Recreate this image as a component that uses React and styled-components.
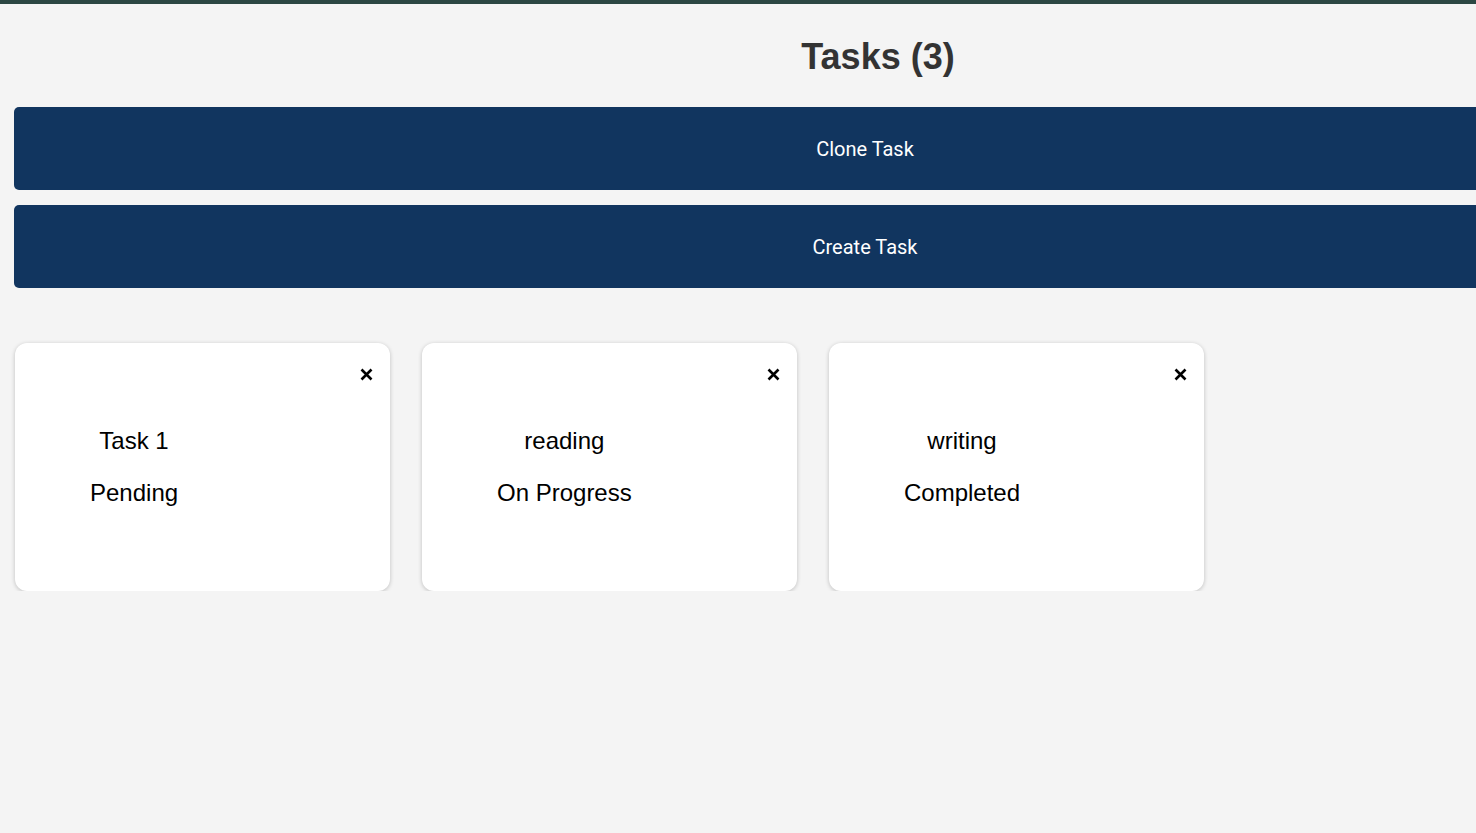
import React from "react";
import styled, { createGlobalStyle } from "styled-components";

const Global = createGlobalStyle`
  html, body { margin: 0; padding: 0; }
  body {
    background: #f4f4f4;
    font-family: "Liberation Sans", Arial, sans-serif;
    overflow-x: hidden;
  }
`;

const TopBar = styled.div`
  height: 4px;
  background: #2c4743;
`;

const Main = styled.main`
  width: 1756px;
`;

const Title = styled.h1`
  margin: 0;
  padding-top: 32px;
  height: 103px;
  box-sizing: border-box;
  text-align: center;
  font-size: 36px;
  line-height: 41px;
  font-weight: 700;
  color: #333;
`;

const ButtonStack = styled.div`
  display: flex;
  flex-direction: column;
  gap: 15px;
  margin-left: 14px;
  width: 1702px;
`;

const ActionButton = styled.button`
  height: 83px;
  border: none;
  border-radius: 5px;
  background: #11355f;
  color: #fff;
  font-family: "Roboto", "Liberation Sans", sans-serif;
  font-size: 20px;
  cursor: pointer;
`;

const CardRow = styled.div`
  display: flex;
  gap: 32px;
  margin: 55px 0 0 15px;
`;

const Card = styled.div`
  position: relative;
  width: 375px;
  height: 248px;
  box-sizing: border-box;
  background: #fff;
  border-radius: 12px;
  box-shadow: 0 1px 4px rgba(0, 0, 0, 0.22);
  padding: 84px 0 0 75px;
`;

const Close = styled.button`
  position: absolute;
  top: 23px;
  right: 16px;
  width: 16px;
  height: 16px;
  padding: 0;
  border: none;
  background: none;
  display: flex;
  align-items: center;
  justify-content: center;
  cursor: pointer;
`;

const Content = styled.div`
  display: inline-flex;
  flex-direction: column;
  align-items: center;
  gap: 24px;
  font-size: 24px;
  line-height: 28px;
  color: #000;
`;

const tasks = [
  { name: "Task 1", status: "Pending" },
  { name: "reading", status: "On Progress" },
  { name: "writing", status: "Completed" },
];

const XIcon = () => (
  <svg width="13" height="13" viewBox="0 0 13 13">
    <path d="M1.5 1.5 L11.5 11.5 M11.5 1.5 L1.5 11.5" stroke="#000" strokeWidth="2.6" strokeLinecap="butt" />
  </svg>
);

export default function App() {
  return (
    <>
      <Global />
      <TopBar />
      <Main>
        <Title>Tasks ({tasks.length})</Title>
        <ButtonStack>
          <ActionButton>Clone Task</ActionButton>
          <ActionButton>Create Task</ActionButton>
        </ButtonStack>
        <CardRow>
          {tasks.map((t) => (
            <Card key={t.name}>
              <Close aria-label="delete">
                <XIcon />
              </Close>
              <Content>
                <span>{t.name}</span>
                <span>{t.status}</span>
              </Content>
            </Card>
          ))}
        </CardRow>
      </Main>
    </>
  );
}
